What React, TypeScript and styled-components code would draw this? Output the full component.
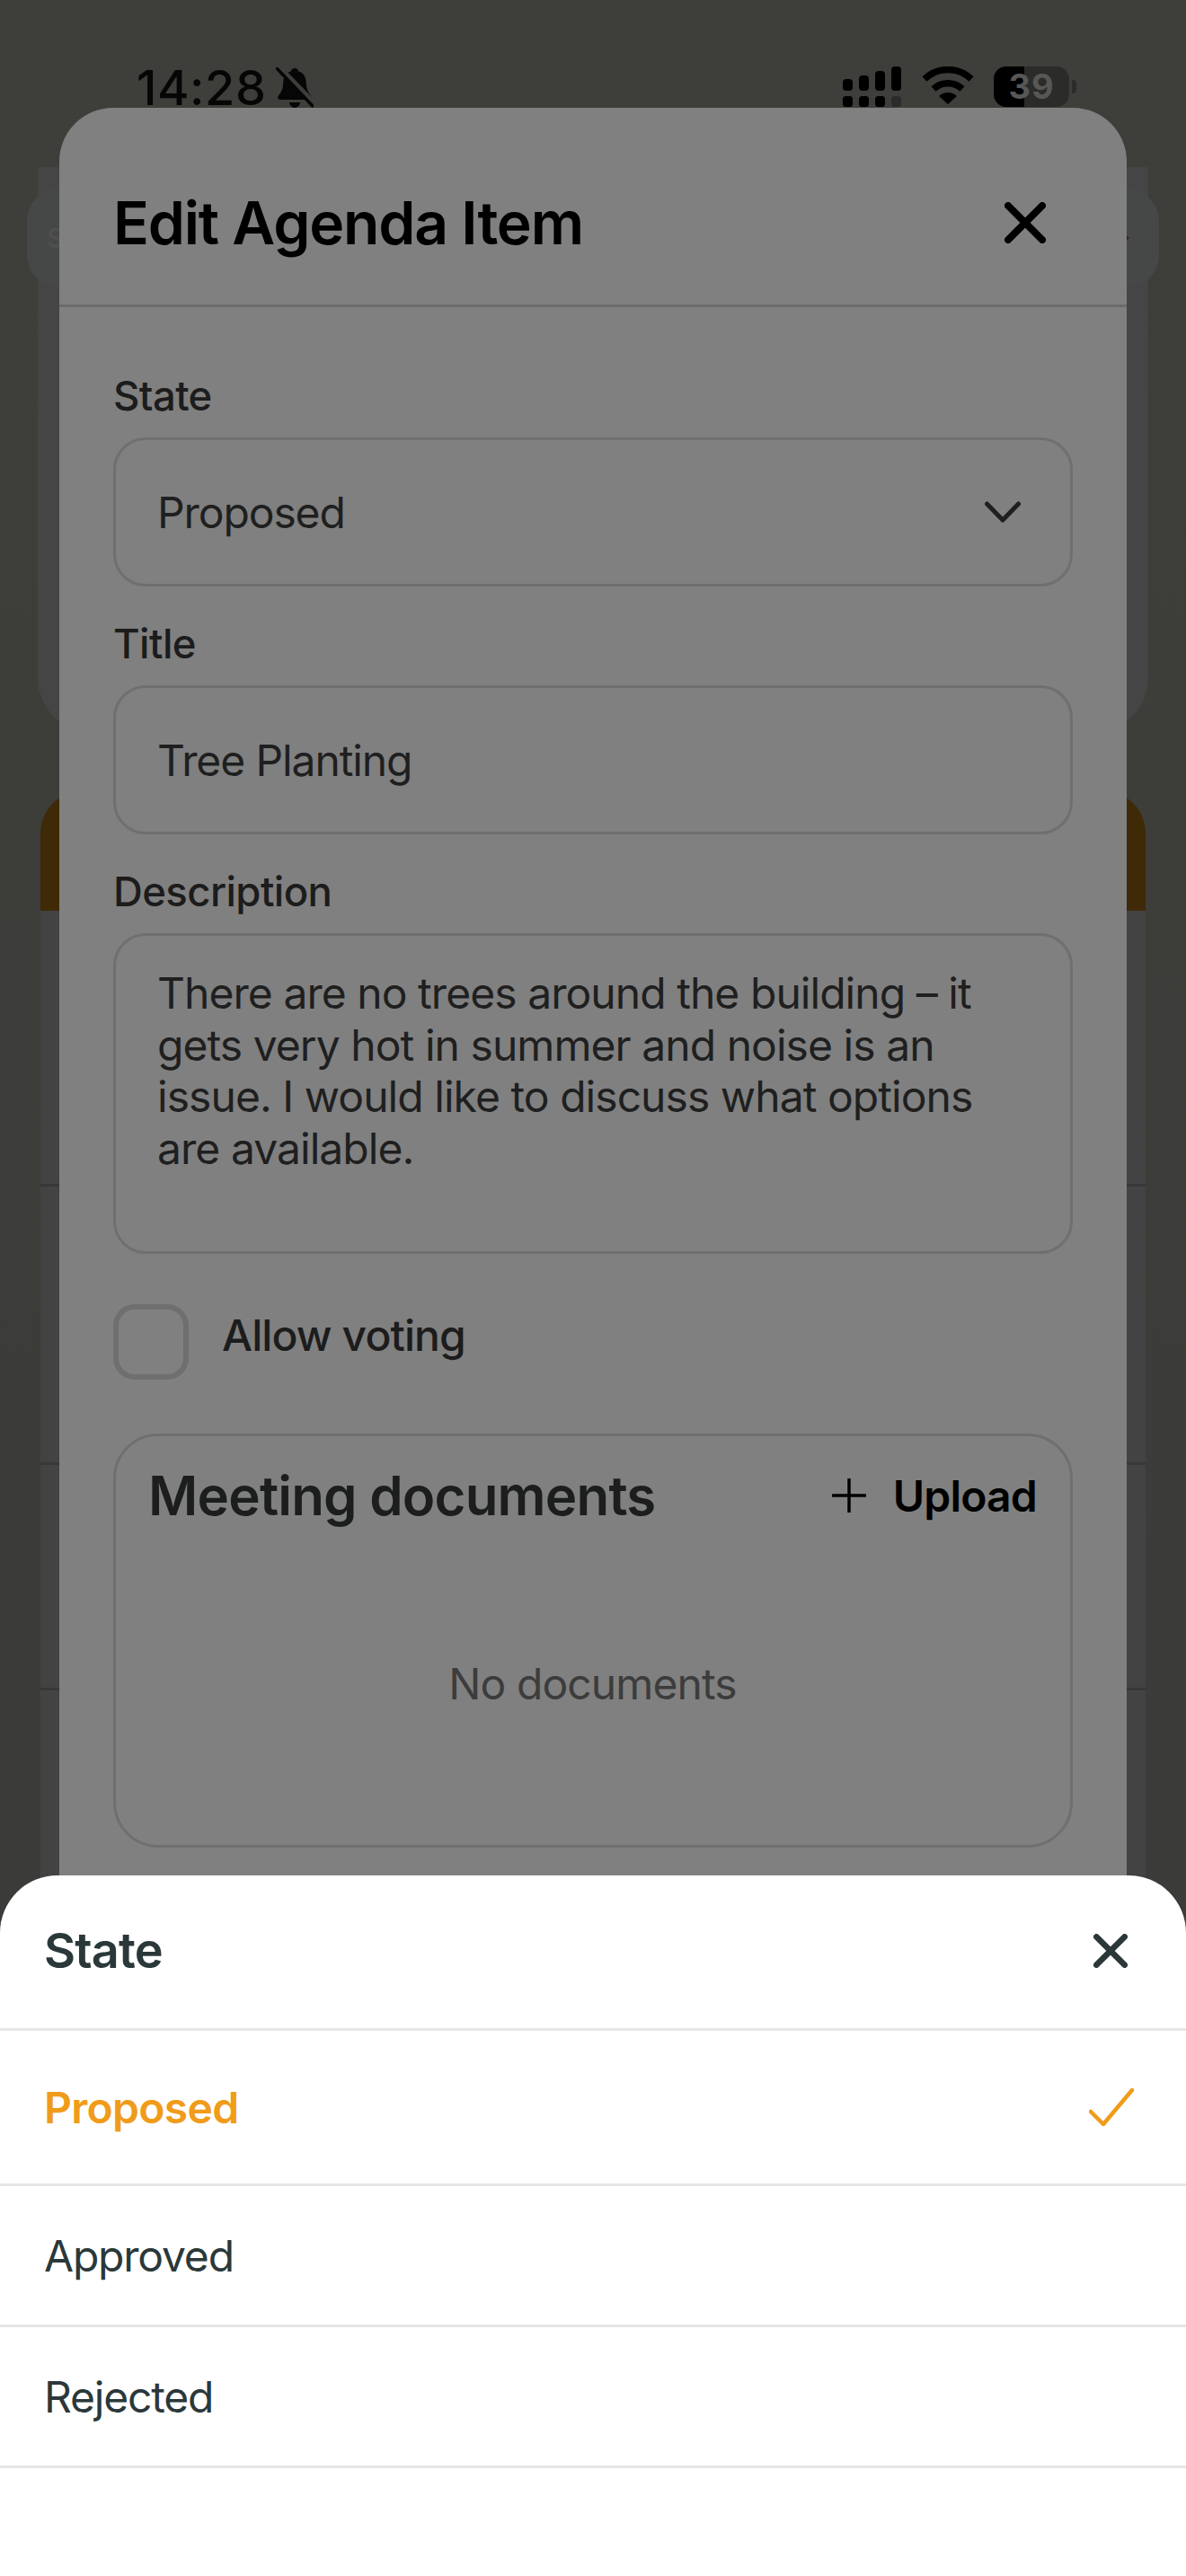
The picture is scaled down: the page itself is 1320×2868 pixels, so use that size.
import React from "react";
import styled, { createGlobalStyle } from "styled-components";

const GlobalStyle = createGlobalStyle`
  html, body {
    margin: 0;
    padding: 0;
    background: #3b3c39;
  }
  * {
    box-sizing: border-box;
  }
`;

const Screen = styled.div`
  position: relative;
  width: 1320px;
  height: 2868px;
  overflow: hidden;
  font-family: Inter, "Liberation Sans", sans-serif;
  background: linear-gradient(#3e3e3a, #3a3b39);
`;

/* dimmed page behind the modal */
const StatusBar = styled.div`
  display: flex;
  justify-content: space-between;
  align-items: flex-start;
  height: 186px;
  padding: 74px 122px 0 152px;
`;

const StatusLeft = styled.div`
  display: flex;
  align-items: center;
  gap: 10px;
`;

const Clock = styled.span`
  font-size: 54px;
  line-height: 47px;
  font-weight: 500;
  letter-spacing: 0.6px;
  color: #060606;
`;

const StatusRight = styled.div`
  display: flex;
  align-items: flex-start;
  gap: 22px;
`;

const BatteryWrap = styled.div`
  display: flex;
  align-items: center;
  gap: 3px;
`;

const Battery = styled.div`
  position: relative;
  width: 84px;
  height: 45px;
  border-radius: 14px;
  background: linear-gradient(90deg, #000 40%, #2b2b2a 40%);
  text-align: center;
  font-size: 38px;
  line-height: 45px;
  font-weight: 700;
  letter-spacing: 1px;
  color: #575755;
`;

const BatteryTip = styled.div`
  width: 5px;
  height: 15px;
  border-radius: 0 4px 4px 0;
  background: #2b2b2a;
`;

const BehindPage = styled.div`
  display: flex;
  flex-direction: column;
  align-items: center;
`;

const SummaryCard = styled.div`
  position: relative;
  width: 1236px;
  height: 629px;
  border-radius: 0 0 60px 60px;
  background: #444544;
`;

const TabPill = styled.div`
  position: absolute;
  top: 24px;
  left: -12px;
  right: -12px;
  height: 110px;
  display: flex;
  align-items: center;
  justify-content: space-between;
  padding: 0 36px 0 24px;
  border-radius: 36px;
  background: #464747;
`;

const TabLetter = styled.span`
  margin-left: -2px;
  font-size: 30px;
  font-weight: 600;
  color: #4e4f4f;
`;

const TabArrow = styled.span`
  width: 14px;
  height: 14px;
  transform: rotate(45deg);
  background: #2b2b2b;
`;

const OrangeHead = styled.div`
  width: 1230px;
  height: 134px;
  margin-top: 65px;
  border-radius: 48px 48px 0 0;
  background: #3f2a08;
`;

const RowStack = styled.div`
  width: 1230px;
  display: flex;
  flex-direction: column;
`;

const BehindRow = styled.div<{ $h: number }>`
  height: ${(p) => p.$h}px;
  border-bottom: 3px solid #383838;
  background: #434343;
`;

/* edit modal */
const Modal = styled.div`
  position: absolute;
  top: 120px;
  left: 66px;
  width: 1188px;
  bottom: 0;
  border-radius: 60px 60px 0 0;
  background: #808080;
`;

const ModalHeader = styled.div`
  display: flex;
  align-items: center;
  justify-content: space-between;
  height: 222px;
  padding: 36px 90px 0 60px;
  border-bottom: 3px solid #6c6c6c;
`;

const ModalTitle = styled.h1`
  margin: 0;
  font-size: 66px;
  line-height: 72px;
  font-weight: 600;
  letter-spacing: -1.2px;
  color: #000;
`;

const ModalBody = styled.div`
  padding: 69px 60px 0;
`;

const Field = styled.div`
  margin-bottom: 34px;
`;

const FieldLabel = styled.div`
  height: 60px;
  margin-bottom: 16px;
  font-size: 45.5px;
  line-height: 60px;
  font-weight: 500;
  letter-spacing: -0.6px;
  color: #1c1c1c;
`;

const InputBox = styled.div`
  display: flex;
  align-items: center;
  justify-content: space-between;
  height: 166px;
  padding: 0 55px 0 46px;
  border: 3px solid #6f6f6f;
  border-radius: 36px;
  font-size: 48px;
  font-weight: 400;
  letter-spacing: -1.1px;
  color: #1f1f1f;
`;

const TextBox = styled.div`
  height: 357px;
  padding: 35px 44px 0 46px;
  border: 3px solid #6f6f6f;
  border-radius: 36px;
  font-size: 48px;
  line-height: 57.6px;
  letter-spacing: -0.95px;
  color: #1f1f1f;
`;

const CheckRow = styled.div`
  display: flex;
  align-items: flex-start;
  gap: 37px;
  margin-top: 56px;
`;

const CheckBox = styled.div`
  width: 84px;
  height: 84px;
  border: 6px solid #6f6f6f;
  border-radius: 24px;
`;

const CheckLabel = styled.div`
  font-size: 48px;
  line-height: 70px;
  font-weight: 500;
  letter-spacing: -0.9px;
  color: #1c1c1c;
`;

const DocsCard = styled.div`
  height: 461px;
  margin-top: 60px;
  padding: 27px 37px 0 36px;
  border: 3px solid #6f6f6f;
  border-radius: 50px;
`;

const DocsHead = styled.div`
  display: flex;
  align-items: center;
  justify-content: space-between;
`;

const DocsTitle = styled.h2`
  margin: 0;
  font-size: 60px;
  line-height: 78px;
  font-weight: 600;
  letter-spacing: -0.8px;
  color: #1c1e1e;
`;

const UploadButton = styled.div`
  display: flex;
  align-items: center;
  gap: 30px;
  font-size: 48px;
  font-weight: 600;
  letter-spacing: -0.8px;
  color: #000;
`;

const EmptyNote = styled.div`
  margin-top: 141px;
  text-align: center;
  font-size: 48px;
  line-height: 60px;
  letter-spacing: -0.9px;
  color: #3c3c3c;
`;

/* bottom sheet */
const Sheet = styled.div`
  position: absolute;
  left: 0;
  right: 0;
  top: 2088px;
  bottom: 0;
  border-radius: 64px 64px 0 0;
  background: #fff;
`;

const SheetHead = styled.div`
  display: flex;
  align-items: center;
  justify-content: space-between;
  height: 173px;
  padding: 0 65px 3px 49px;
  border-bottom: 3px solid #e6e6e6;
  font-size: 54px;
  font-weight: 600;
  letter-spacing: -0.8px;
  color: #2b383a;
`;

const SheetRow = styled.div<{ $h: number; $active?: boolean }>`
  display: flex;
  align-items: center;
  justify-content: space-between;
  height: ${(p) => p.$h}px;
  padding: 0 58px 0 49px;
  border-bottom: 3px solid #e6e6e6;
  font-size: 48px;
  font-weight: ${(p) => (p.$active ? 600 : 400)};
  letter-spacing: ${(p) => (p.$active ? "-0.7px" : "-1.2px")};
  color: ${(p) => (p.$active ? "#f09c1a" : "#2b383a")};
`;

function CloseIcon({ size, color }: { size: number; color: string }) {
  return (
    <svg width={size} height={size} viewBox="0 0 40 40" fill="none">
      <path
        d="M3.5 3.5 36.5 36.5M36.5 3.5 3.5 36.5"
        stroke={color}
        strokeWidth="7"
        strokeLinecap="round"
      />
    </svg>
  );
}

function BellOff() {
  return (
    <svg width="42" height="46" viewBox="0 0 42 46" fill="none">
      <path
        d="M21 1c2.5 0 4 1.7 4.3 3.6C31 6.2 33.500 11 33.800 17c.3 6 1.200 9.500 5.200 14.500 1.500 2 .5 4.500-2 4.500H5c-2.500 0-3.500-2.500-2-4.500C7 26.500 8 23 8.200 17 8.500 11 11 6.200 16.700 4.600 17 2.700 18.500 1 21 1Z"
        fill="#060606"
      />
      <path d="M15 39h12c-.5 3.500-3 6-6 6s-5.500-2.500-6-6Z" fill="#060606" />
      <path d="M2-1 44 42" stroke="#3e3e3a" strokeWidth="7" />
      <path d="M1 1 41 43" stroke="#060606" strokeWidth="3.500" strokeLinecap="round" />
    </svg>
  );
}

function Signal() {
  const tops = [
    { x: 0, y: 14, h: 13, c: "#000" },
    { x: 18, y: 10, h: 17, c: "#000" },
    { x: 36, y: 5, h: 22, c: "#000" },
    { x: 54, y: 0, h: 27, c: "#000" },
  ];
  return (
    <svg width="66" height="46" viewBox="0 0 66 46">
      {tops.map((t) => (
        <rect key={t.x} x={t.x} y={t.y} width="11" height={t.h} rx="4" fill={t.c} />
      ))}
      {tops.map((t, i) => (
        <rect
          key={t.x}
          x={t.x}
          y="33"
          width="11"
          height="12"
          rx="3.500"
          fill={i === 3 ? "#2b2b2b" : "#000"}
        />
      ))}
    </svg>
  );
}

function Wifi() {
  return (
    <svg width="58" height="44" viewBox="0 0 58 44" fill="none">
      <path d="M3 14C18 0 40 0 55 14" stroke="#000" strokeWidth="7.500" strokeLinejoin="round" />
      <path d="M13 25c9-8.500 23-8.500 32 0" stroke="#000" strokeWidth="7.500" />
      <path d="M19 33c6-5.500 14-5.500 20 0L29 42Z" fill="#000" />
    </svg>
  );
}

export default function App() {
  return (
    <Screen>
      <GlobalStyle />
      <StatusBar>
        <StatusLeft>
          <Clock>14:28</Clock>
          <BellOff />
        </StatusLeft>
        <StatusRight>
          <Signal />
          <Wifi />
          <BatteryWrap>
            <Battery>39</Battery>
            <BatteryTip />
          </BatteryWrap>
        </StatusRight>
      </StatusBar>

      <BehindPage>
        <SummaryCard>
          <TabPill>
            <TabLetter>S</TabLetter>
            <TabArrow />
          </TabPill>
        </SummaryCard>
        <OrangeHead />
        <RowStack>
          <BehindRow $h={307} />
          <BehindRow $h={310} />
          <BehindRow $h={251} />
          <BehindRow $h={300} />
        </RowStack>
      </BehindPage>

      <Modal>
        <ModalHeader>
          <ModalTitle>Edit Agenda Item</ModalTitle>
          <CloseIcon size={46} color="#000" />
        </ModalHeader>
        <ModalBody>
          <Field>
            <FieldLabel>State</FieldLabel>
            <InputBox>
              Proposed
              <svg width="40" height="24" viewBox="0 0 40 24" fill="none">
                <path
                  d="M2.500 3 20 21 37.500 3"
                  stroke="#1f1f1f"
                  strokeWidth="5"
                  strokeLinecap="round"
                  strokeLinejoin="round"
                />
              </svg>
            </InputBox>
          </Field>
          <Field>
            <FieldLabel>Title</FieldLabel>
            <InputBox>Tree Planting</InputBox>
          </Field>
          <div>
            <FieldLabel>Description</FieldLabel>
            <TextBox>
              There are no trees around the building – it gets very hot in summer and noise is an
              issue. I would like to discuss what options are available.
            </TextBox>
          </div>
          <CheckRow>
            <CheckBox />
            <CheckLabel>Allow voting</CheckLabel>
          </CheckRow>
          <DocsCard>
            <DocsHead>
              <DocsTitle>Meeting documents</DocsTitle>
              <UploadButton>
                <svg width="38" height="38" viewBox="0 0 38 38" fill="none">
                  <path d="M19 1v36M1 19h36" stroke="#000" strokeWidth="3.500" strokeLinecap="round" />
                </svg>
                Upload
              </UploadButton>
            </DocsHead>
            <EmptyNote>No documents</EmptyNote>
          </DocsCard>
        </ModalBody>
      </Modal>

      <Sheet>
        <SheetHead>
          State
          <CloseIcon size={38} color="#2b383a" />
        </SheetHead>
        <SheetRow $h={173} $active>
          Proposed
          <svg width="50" height="42" viewBox="0 0 50 42" fill="none">
            <path
              d="M2 26 16 40 48 2"
              stroke="#f09c1a"
              strokeWidth="4.500"
              strokeLinecap="round"
              strokeLinejoin="round"
            />
          </svg>
        </SheetRow>
        <SheetRow $h={157}>Approved</SheetRow>
        <SheetRow $h={157}>Rejected</SheetRow>
      </Sheet>
    </Screen>
  );
}
